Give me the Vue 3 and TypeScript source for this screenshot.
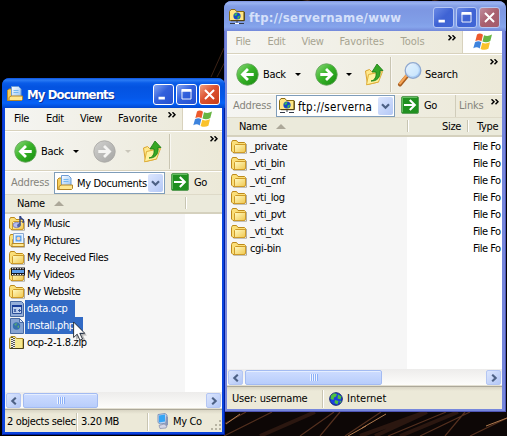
<script setup lang="ts">
interface FileItem {
  name: string
  icon: string
  type?: string
  selected?: boolean
}
interface ExplorerWindow {
  id: string
  title: string
  titleIcon: string
  menu: string[]
  forward: string
  search: boolean
  address: string
  addressIcon: string
  links: boolean
  columns: string[]
  files: FileItem[]
  status: string[]
  zoneIcon: string
}

const folders = ['_private', '_vti_bin', '_vti_cnf', '_vti_log', '_vti_pvt', '_vti_txt', 'cgi-bin']

const windows: ExplorerWindow[] = [
  {
    id: 'remote',
    title: 'ftp://servername/www',
    titleIcon: 'ftp',
    menu: ['File', 'Edit', 'View', 'Favorites', 'Tools'],
    forward: 'forward',
    search: true,
    address: 'ftp://serverna',
    addressIcon: 'ftp',
    links: true,
    columns: ['Size', 'Type'],
    files: folders.map((name) => ({ name, icon: 'folder', type: 'File Fo' })),
    status: ['User: username', 'Internet'],
    zoneIcon: 'globe',
  },
  {
    id: 'local',
    title: 'My Documents',
    titleIcon: 'docs',
    menu: ['File', 'Edit', 'View', 'Favorite'],
    forward: 'forward-off',
    search: false,
    address: 'My Documents',
    addressIcon: 'docs',
    links: false,
    columns: [''],
    files: [
      { name: 'My Music', icon: 'music' },
      { name: 'My Pictures', icon: 'pictures' },
      { name: 'My Received Files', icon: 'folder' },
      { name: 'My Videos', icon: 'videos' },
      { name: 'My Website', icon: 'folder' },
      { name: 'data.ocp', icon: 'data', selected: true },
      { name: 'install.php', icon: 'php', selected: true },
      { name: 'ocp-2-1.8.zip', icon: 'zip' },
    ],
    status: ['2 objects selec', '3.20 MB', 'My Co'],
    zoneIcon: 'computer',
  },
]
</script>

<template>
  <div class="desktop">
    <svg class="defs" width="0" height="0">
      <defs>
        <linearGradient id="g-green" x1="0" y1="0" x2="1" y2="1">
          <stop offset="0" stop-color="#8fd97f" /><stop offset=".45" stop-color="#3bb52b" /><stop offset="1" stop-color="#138a0c" />
        </linearGradient>
        <linearGradient id="g-grey" x1="0" y1="0" x2="1" y2="1">
          <stop offset="0" stop-color="#d2d2d0" /><stop offset="1" stop-color="#a4a4a2" />
        </linearGradient>
        <linearGradient id="g-folder" x1="0" y1="0" x2="1" y2="1">
          <stop offset="0" stop-color="#fffbc4" /><stop offset="1" stop-color="#f0c64c" />
        </linearGradient>
        <linearGradient id="g-page" x1="0" y1="0" x2="1" y2="1">
          <stop offset="0" stop-color="#ffffff" /><stop offset="1" stop-color="#8fc0f4" />
        </linearGradient>
      </defs>

      <symbol id="back" viewBox="0 0 24 24">
        <circle cx="12" cy="12" r="11.2" fill="url(#g-green)" stroke="#68a45e" stroke-width=".9" />
        <path d="M18.5 12H7.5M12.5 6.2L6.7 12l5.8 5.8" fill="none" stroke="#fff" stroke-width="2.9" />
      </symbol>
      <symbol id="forward" viewBox="0 0 24 24">
        <circle cx="12" cy="12" r="11.2" fill="url(#g-green)" stroke="#68a45e" stroke-width=".9" />
        <path d="M5.5 12h11M11.5 6.2l5.8 5.8-5.8 5.8" fill="none" stroke="#fff" stroke-width="2.9" />
      </symbol>
      <symbol id="forward-off" viewBox="0 0 24 24">
        <circle cx="12" cy="12" r="11.2" fill="url(#g-grey)" stroke="#aaa9a5" stroke-width=".9" />
        <path d="M5.5 12h11M11.5 6.2l5.8 5.8-5.8 5.8" fill="none" stroke="#f4f4f2" stroke-width="2.9" />
      </symbol>
      <symbol id="up" viewBox="0 0 20 24">
        <path d="M1.500 9l4-1.500 2 2 7-1.500v12l-11 2.500z" fill="#ffe88b" stroke="#dba42e" />
        <path d="M4.500 12.500l14-3-4 10.500-12 2.800z" fill="#fff2a0" stroke="#dfae38" />
        <path d="M7 19c4-1 5.500-4 5-9H8l5-8 6 6.500h-3c1 7-3.500 11-9 10.500z" fill="#36a725" stroke="#187b12" stroke-width=".8" />
      </symbol>
      <symbol id="search" viewBox="0 0 26 26">
        <path d="M3 23.500L10 15" stroke="#a85d1e" stroke-width="4" stroke-linecap="round" />
        <path d="M3 22.500L9.500 14.500" stroke="#f6a657" stroke-width="2.200" stroke-linecap="round" />
        <circle cx="16" cy="9.500" r="7.800" fill="url(#g-page)" stroke="#8fa9d0" stroke-width="1.300" />
        <circle cx="16" cy="9.500" r="5.800" fill="#d9f0ff" opacity=".7" />
      </symbol>
      <symbol id="go" viewBox="0 0 18 18">
        <rect x=".5" y=".5" width="17" height="17" rx="1.500" fill="#209020" stroke="#5b9e58" />
        <path d="M1.500 16V1.500H16" fill="none" stroke="#65bd61" />
        <path d="M3 9h10M8.800 4l5 5-5 5" fill="none" stroke="#fff" stroke-width="2.100" />
      </symbol>
      <symbol id="folder" viewBox="0 0 16 16">
        <path d="M2.500 14.200H15.600V5" fill="none" stroke="#77705c" opacity=".6" />
        <path d="M.5 12V3.500l1-2h4l1.500 2h6.500l1 1V12l-1 1.500H2z" fill="#fbdf78" stroke="#bd8a1b" />
        <path d="M3.500 13V6.500l1-1h10V12l-1 1.500h-10z" fill="url(#g-folder)" stroke="#cf9b28" />
      </symbol>
      <symbol id="docs" viewBox="0 0 16 16">
        <path d="M.5 14.500v-10l1.500-1.500h4v11.500z" fill="#f6cd5b" stroke="#b98a28" />
        <path d="M4.500.5h7l2.500 2.500v8.500H4.500z" fill="url(#g-page)" stroke="#6d9cd5" />
        <path d="M6.500 4.500h5M6.500 6.500h5" stroke="#75b7ef" />
        <path d="M2 14.500v-3l2-1.500h11.500v3.500l-1 1z" fill="#ffe790" stroke="#b58625" />
      </symbol>
      <symbol id="globe" viewBox="0 0 14 14">
        <circle cx="7" cy="7" r="6.300" fill="#1b3fe0" stroke="#10206c" />
        <path d="M2 3.500L5 1.300l3 .7-1 2.500-2 1-.5 2.500-3-1zM9 2.500l3.500 2-1 3-3-1zM6 8l3.500 1-1 3.500-3-1.500zM10.500 9.500l2-1-1.500 3z" fill="#4cc13f" />
      </symbol>
      <symbol id="ftp" viewBox="0 0 16 16">
        <path d="M.5 11.500v-9L2 .5h4l1.500 2h7.500v9z" fill="#ffe784" stroke="#8a6b12" />
        <path d="M15.300 3v8.700H2" fill="none" stroke="#4a3b12" />
        <circle cx="8" cy="7" r="3.600" fill="#1747c8" /><path d="M5 6l2-2 1.500.8L7 7zM8.500 7.500l2.500-1-1 3-1.500.5z" fill="#3ec646" />
        <path d="M8 12v2M1 14.500h14" stroke="#333a48" /><path d="M6 14.500h4" stroke="#fff" stroke-width="1.200" />
      </symbol>
      <symbol id="music" viewBox="0 0 16 16">
        <use href="#folder" width="16" height="16" />
        <ellipse cx="7.500" cy="9" rx="3.500" ry="2.600" fill="#b7bff0" stroke="#8084c0" />
        <path d="M11 9.500V-1l1 3 2.500 2-.5 3" fill="none" stroke="#2e4386" stroke-width="1.400" /><circle cx="9.800" cy="9.500" r="1.700" fill="#50619f" />
      </symbol>
      <symbol id="pictures" viewBox="0 0 16 16">
        <use href="#folder" width="16" height="16" />
        <path d="M4.500.5h10v10h-10z" fill="#e9f4ff" stroke="#8ba7cf" /><path d="M6.500 2.500h6v6h-6z" fill="#5ca2ee" />
        <circle cx="9.500" cy="5.500" r="1.800" fill="#f9d6b5" /><path d="M3 10.500h12v3H3z" fill="#ffe991" stroke="#b98a28" />
      </symbol>
      <symbol id="videos" viewBox="0 0 16 16">
        <use href="#folder" width="16" height="16" />
        <path d="M2 .5h14v8H2z" fill="#17171c" /><path d="M3 3h12v3H3z" fill="#5f9fea" />
        <path d="M3 1.700h12M3 7.500h12" stroke="#fff" stroke-dasharray="1.300 1.300" />
      </symbol>
      <symbol id="data" viewBox="0 0 16 16">
        <path d="M1.500.5h11l2 2v13h-13z" fill="#95afd9" stroke="#476aa3" /><path d="M3.500 4.500h9v8h-9z" fill="#bed0ee" stroke="#2b4f98" />
        <path d="M3 5h10" stroke="#183c98" stroke-width="2" /><path d="M5 8l2 3M7 8l-2 3M9 9.500h3M10.500 8v3" stroke="#3558a0" />
      </symbol>
      <symbol id="php" viewBox="0 0 16 16">
        <path d="M1.500.5h9l4 4v11h-13z" fill="#86a4d3" stroke="#476aa3" /><path d="M10.500.5v4h4z" fill="#d8e5fa" stroke="#476aa3" />
        <circle cx="7.500" cy="8" r="3.700" fill="#356fae" /><path d="M5 6l3-1-1 3zM8 9l2-2v3z" fill="#57a873" />
      </symbol>
      <symbol id="zip" viewBox="0 0 16 16">
        <path d="M.5 13.500v-10L2 1.500h4l1.500 2h6.500v10z" fill="#f6e88d" stroke="#ae8b21" />
        <path d="M14.500 4v9.500H1" fill="none" stroke="#4a421d" />
        <path d="M2 3h4v10H2z" fill="#eee" /><path d="M3 2v11M5 3v10" stroke="#242424" stroke-dasharray="1 1" stroke-width="1.500" />
      </symbol>
      <symbol id="computer" viewBox="0 0 14 16">
        <path d="M2 1.500L9 .5l2 1.500v8L4 11 2 9.500z" fill="#bed3f0" stroke="#8197bd" /><path d="M3 2.500l6-1v7l-6 1z" fill="#35a5f4" />
        <path d="M10 3l2 1v8l-3 2" fill="#8996b7" /><path d="M3 12.500l5-1.500 3 2-1 2-6 .5z" fill="#d4d5e6" stroke="#8389aa" stroke-width=".7" />
      </symbol>
      <symbol id="flag" viewBox="0 0 20 18">
        <path d="M4 1.500C6 0 8 .4 10 1.800L8.500 8.300C6.500 7 4.500 7 2.300 8.300z" fill="#ed5a2c" />
        <path d="M11 2.200c2.500 1.300 5 1 8-.6L17.300 8c-2.700 1.500-5.200 1.600-7.800.5z" fill="#67b543" />
        <path d="M2 9.300c2.500-1.300 4.500-1.200 6.300 0L6.700 15.500C4.700 14 2.700 14 .3 15.300z" fill="#3d83dd" />
        <path d="M9.300 9.800c2.500 1 5 .8 7.700-.5l-1.600 6.400c-2.700 1.500-5.200 1.500-7.800.2z" fill="#fac22c" />
      </symbol>
      <symbol id="more" viewBox="0 0 8 6">
        <path d="M.5.3L3 2.800.5 5.300M4.500.3L7 2.800 4.500 5.300" fill="none" stroke="#000" stroke-width="1.500" />
      </symbol>
      <symbol id="chev" viewBox="0 0 8 8">
        <path d="M2.200.7L5.700 4 2.200 7.300" fill="none" stroke="#4d6185" stroke-width="2.100" />
      </symbol>
    </svg>

    <svg class="wallpaper" viewBox="0 0 507 436">
      <rect width="507" height="436" fill="#000" />
      <rect x="225" y="412" width="282" height="24" fill="#0d0706" />
      <g stroke="#54301f" fill="none">
        <path d="M211 77L224 48M217 77L227 58M294 3L310 0M432 0L448 3" opacity=".7" />
        <path d="M224 424l22-12M224 436l48-24M300 436l34-24M320 436l20-24M345 436l36-24M388 436l58-24M420 436l50-24M445 436l20-24M470 436l37-18" stroke-width="1.200" />
        <path d="M260 436l55-24M360 436l66-24M375 436l52-24M400 436l58-24" stroke="#2b1710" stroke-width="4" />
        <path d="M226 424l14-10M362 428l24-14M348 436l18-10M486 426l21-8" stroke="#b07a4e" />
      </g>
    </svg>

    <section v-for="w in windows" :key="w.id" class="window" :class="w.id">
      <header class="titlebar">
        <svg class="ic16"><use :href="'#' + w.titleIcon" /></svg>
        <h1>{{ w.title }}</h1>
        <div class="controls">
          <svg class="ctl" viewBox="0 0 21 21"><path d="M5 14.500h7" stroke="#fff" stroke-width="3" /></svg>
          <svg class="ctl" viewBox="0 0 21 21"><path d="M5.500 6v9.500h10V6" fill="none" stroke="#fff" /><path d="M5 6h11" stroke="#fff" stroke-width="3" /></svg>
          <svg class="ctl close" viewBox="0 0 21 21"><path d="M5.500 5.500l10 10M15.500 5.500l-10 10" stroke="#fff" stroke-width="2.200" /></svg>
        </div>
      </header>

      <nav class="menubar">
        <span v-for="m in w.menu" :key="m">{{ m }}</span>
        <svg class="more"><use href="#more" /></svg>
        <div class="brand"><svg><use href="#flag" /></svg></div>
      </nav>

      <div class="toolbar">
        <svg class="round"><use href="#back" /></svg>
        <span>Back</span>
        <i class="caret"></i>
        <svg class="round"><use :href="'#' + w.forward" /></svg>
        <i class="caret" :class="{ off: w.forward === 'forward-off' }"></i>
        <svg class="upicon"><use href="#up" /></svg>
        <b class="rule"></b>
        <template v-if="w.search">
          <svg class="lens"><use href="#search" /></svg>
          <span>Search</span>
        </template>
        <svg class="more"><use href="#more" /></svg>
      </div>

      <div class="addressbar">
        <label>Address</label>
        <div class="combo">
          <svg class="ic16"><use :href="'#' + w.addressIcon" /></svg>
          <span>{{ w.address }}</span>
          <div class="drop"><svg viewBox="0 0 9 7"><path d="M1 1.200l3.500 3.500L8 1.200" fill="none" stroke="#4d6185" stroke-width="2.200" /></svg></div>
        </div>
        <svg class="go"><use href="#go" /></svg>
        <span class="golabel">Go</span>
        <div v-if="w.links" class="links">Links</div>
        <svg v-if="w.links" class="more"><use href="#more" /></svg>
      </div>

      <div class="colhead">
        <div class="namecol">Name<i class="sort"></i></div>
        <div v-for="c in w.columns" :key="c" class="col">{{ c }}</div>
      </div>

      <ul class="list">
        <li v-for="f in w.files" :key="f.name" :class="{ selected: f.selected }">
          <svg class="ic16"><use :href="'#' + f.icon" /></svg>
          <div class="cell"><span class="fname">{{ f.name }}</span></div>
          <span v-if="f.type" class="ftype">{{ f.type }}</span>
        </li>
      </ul>

      <div class="scrollbar">
        <div class="sbtn"><svg class="flip"><use href="#chev" /></svg></div>
        <div class="thumb"><i></i><i></i><i></i><i></i></div>
        <div class="sbtn end"><svg><use href="#chev" /></svg></div>
      </div>

      <footer class="statusbar">
        <div v-for="(s, i) in w.status" :key="s" class="pane">
          <svg v-if="i === w.status.length - 1" class="zone"><use :href="'#' + w.zoneIcon" /></svg>
          <span>{{ s }}</span>
        </div>
        <svg v-if="w.id === 'local'" class="grip" viewBox="0 0 12 12">
          <path d="M9 1h2v2H9zM5 5h2v2H5zM9 5h2v2H9zM1 9h2v2H1zM5 9h2v2H5zM9 9h2v2H9z" fill="#b8b4a3" />
        </svg>
      </footer>
    </section>

    <svg class="cursor" viewBox="0 0 14 22">
      <path d="M3 3v16l4-3.500 2.500 5.500 3-1.500-2.500-5h4z" fill="#000" opacity=".25" />
      <path d="M.6 1v15.500l3.600-3.300 2.700 6 2.600-1.200-2.700-5.700h5z" fill="#fff" stroke="#1c2430" stroke-width=".9" />
    </svg>
  </div>
</template>

<style>
body { margin: 0; overflow: hidden; background: #000; }
</style>

<style scoped>
.desktop { position: relative; width: 507px; height: 436px; overflow: hidden; font: 11px/17px "DejaVu Sans Condensed", "Noto Sans", sans-serif; letter-spacing: -.35px; color: #000; }
.desktop * { box-sizing: border-box; }
.defs, .wallpaper { position: absolute; top: 0; left: 0; }
.wallpaper { width: 507px; height: 436px; }
svg { display: block; flex: none; }
span, label { white-space: nowrap; }

.window { position: absolute; display: flex; flex-direction: column; padding: 0 3px 3px; border-radius: 8px 8px 0 0; }
.local { left: 2px; top: 78px; width: 223px; height: 357px; background: #0a44dd; box-shadow: inset 1px 0 #0831c9, inset -1px -1px #001da0; }
.remote { left: 224px; top: 1px; width: 282px; height: 411px; padding-right: 4px; background: #7687dc; box-shadow: inset 1px 0 #5f6dc8, inset -1px -1px #4f55b4; }

.titlebar { flex: none; display: flex; height: 30px; margin: 0 -3px; padding: 0 5px; border-radius: 7px 7px 0 0; }
.local .titlebar { background: linear-gradient(#0a50dc 0, #2b7cf5 2px, #0a5ce8 5px, #0453e0 9px, #0558ea 20px, #0662f8 25px, #0147d0 30px); }
.remote .titlebar { margin-right: -4px; padding-right: 6px; background: linear-gradient(#7d93e0 0, #9bb4f1 2px, #849fe6 5px, #7d97e2 9px, #819fe8 22px, #86a5ec 26px, #7388d9 30px); }
.titlebar .ic16 { margin-top: 8px; }
h1 { margin: 7px 0 0 4px; font: bold 13px/19px "DejaVu Sans Condensed", "Noto Sans", sans-serif; white-space: nowrap; color: #fff; }
.local h1 { letter-spacing: -.87px; text-shadow: 1px 1px #0a2f94; }
.remote h1 { color: #d5e0fa; letter-spacing: .25px; }
.controls { display: flex; gap: 2px; margin: 6px 0 0 auto; }
.ctl { width: 21px; height: 21px; border: 1px solid #fff; border-radius: 3px; background: linear-gradient(135deg, #85a5f2, #3260dc 45%, #2450cf); }
.ctl.close { background: linear-gradient(135deg, #f0a080, #dc5230 45%, #c93d18); }
.remote .ctl { border-color: #b5c7f3; background: linear-gradient(135deg, #6a8ae6, #3f63d4 50%, #4066d6); }
.remote .ctl.close { background: linear-gradient(135deg, #c08c9c, #a9606f 50%, #a45b6b); }

.menubar, .toolbar, .addressbar { flex: none; display: flex; background: linear-gradient(90deg, #f5f5f2, #eeecdf 70%, #ece9d8); }
.menubar { height: 23px; border-bottom: 1px solid #d8d2bd; line-height: 22px; }
.local .menubar { padding-left: 9px; }
.remote .menubar { padding-left: 8.500px; color: #a7a491; }
.menubar span { flex: none; }
.local .menubar span:nth-child(1) { width: 32px; }
.local .menubar span:nth-child(2) { width: 34px; }
.local .menubar span:nth-child(3) { width: 38px; }
.local .menubar span:nth-child(4) { width: 50px; letter-spacing: 0; }
.remote .menubar span:nth-child(1) { width: 32px; }
.remote .menubar span:nth-child(2) { width: 34px; }
.remote .menubar span:nth-child(3) { width: 38px; }
.remote .menubar span:nth-child(4) { width: 61px; letter-spacing: 0; }
.remote .menubar span:nth-child(5) { width: 47px; letter-spacing: 0; }
.more { width: 8px; height: 6px; }
.menubar .more { margin-top: 3.500px; }
.brand { display: flex; justify-content: center; width: 40px; margin-left: auto; border-left: 1px solid #d8d2bd; background: #fff; }
.brand svg { width: 20px; height: 18px; margin-top: 2px; }

.toolbar { height: 40px; align-items: center; border-top: 1px solid #fff; border-bottom: 1px solid #d8d2bd; padding-left: 9px; }
.round { width: 23px; height: 23px; }
.toolbar span { width: 32px; margin-left: 4px; }
.caret { flex: none; width: 0; height: 0; border: 3px solid transparent; border-top-color: #000; border-bottom: 0; }
.caret.off { border-top-color: #c9c6ba; }
.round ~ .round { margin-left: 14px; }
.local .caret ~ .caret { margin-left: 9px; }
.remote .caret ~ .caret { margin-left: 8px; }
.upicon { width: 20px; height: 24px; margin-left: 11px; }
.remote .upicon { margin-left: 12px; }
.rule { width: 2px; height: 35px; margin-left: 7px; border-left: 1px solid #c9c5b2; border-right: 1px solid #f8f7f2; }
.remote .rule { margin-left: 6px; }
.lens { width: 26px; height: 26px; margin-left: 5px; }
.toolbar .lens + span { margin-left: 2px; letter-spacing: -.2px; }
.toolbar .more { align-self: flex-start; margin: 3.500px 4px 0 auto; }

.addressbar { height: 23px; border-top: 1px solid #fff; color: #000; line-height: 21px; }
.addressbar label { width: 43px; margin-left: 6px; color: #85847b; flex: none; letter-spacing: -.15px; }
.combo { flex: none; display: flex; width: 111px; height: 22px; padding: 2px; border: 1px solid #7f9db9; background: #fff; }
.remote .combo { width: 119px; }
.combo span { flex: 1; margin-left: 4px; line-height: 18px; }
.remote .combo span { margin-left: 3px; letter-spacing: .3px; font-size: 11.500px; }
.drop { display: flex; align-items: center; justify-content: center; width: 15px; height: 18px; margin: -1px -1px 0 0; border-radius: 2px; background: linear-gradient(135deg, #dce6fe, #b4c8f6); }
.drop svg { width: 9px; height: 7px; }
.go { width: 18px; height: 18px; margin: 1px 5px 0 6px; }
.links { width: 36px; margin-left: 18px; padding-left: 3px; border-left: 1px solid #d0ccba; color: #85847b; letter-spacing: -.2px; }
.addressbar .more { margin-top: 4px; }

.colhead { flex: none; display: flex; height: 20px; background: #ebeadb; border-bottom: 2px solid #d5d1be; box-shadow: inset 0 1px #dedac8; line-height: 19px; }
.namecol { display: flex; align-items: center; width: 180px; padding: 0 0 0 12px; }
.sort { width: 0; height: 0; margin-left: 9px; border: 5px solid transparent; border-bottom-color: #aca899; border-top: 0; }
.col { margin: 3px 0; border-left: 1px solid #c7c5b2; box-shadow: inset 1px 0 #fff; line-height: 13px; flex: 1; }
.remote .col { flex: none; width: 60px; text-align: right; padding-right: 6px; }
.remote .col:last-child { width: 35px; text-align: left; padding: 0 0 0 9px; }

.list { flex: 1; margin: 0; padding: 1px 0 0 4px; list-style: none; overflow: hidden; background: linear-gradient(90deg, #f6f6f6 180px, #fff 180px); }
.list li { display: flex; align-items: center; height: 17px; }
.ic16 { width: 16px; height: 16px; overflow: visible; }
.cell { width: 226px; flex: none; }
.ftype { letter-spacing: -.5px; }
.fname { display: inline-block; height: 17px; padding: 0 3px 0 2px; line-height: 17px; }
.remote .fname { padding-left: 3px; }
.local .cell { width: 170px; }
.selected .fname { background: #316ac5; color: #fff; padding-right: 8px; }

.scrollbar { flex: none; display: flex; height: 17px; padding: 1px 1px 0; background: linear-gradient(#edeceb, #fdfdfb); border-bottom: 1px solid #e3e0d2; }
.sbtn { display: flex; align-items: center; justify-content: center; width: 15px; height: 15px; border: 1px solid #b4c6f3; border-radius: 2px; background: linear-gradient(135deg, #dce6fe, #b3c7f5); }
.sbtn svg { width: 8px; height: 8px; }
.flip { transform: scaleX(-1); }
.end { margin-left: auto; }
.thumb { display: flex; align-items: center; justify-content: center; gap: 1px; width: 75px; height: 15px; margin-left: 2px; border: 1px solid #a3bbf2; border-radius: 2px; box-shadow: inset 0 1px #e5eeff; background: linear-gradient(#cddcff, #b8cdfb); }
.remote .thumb { width: 137px; }
.thumb i { width: 1px; height: 7px; background: #eef4fe; box-shadow: 1px 0 #8cb0f8; }

.statusbar { flex: none; display: flex; height: 23px; padding-top: 2px; border-top: 1px solid #aca899; background: linear-gradient(#d9d5c4, #ece9d8 4px); line-height: 20px; }
.pane { display: flex; overflow: hidden; border-left: 1px solid #fff; box-shadow: -1px 0 #c9c5b2; margin: 1px 0; line-height: 18px; }
.pane:first-child { border: 0; box-shadow: none; }
.local .pane:nth-child(1) { width: 72px; padding-left: 2px; }
.local .pane:nth-child(2) { width: 71px; padding-left: 3px; }
.local .pane:nth-child(3) { width: 58px; padding-left: 7px; }
.remote .pane:nth-child(1) { width: 96px; padding-left: 5px; letter-spacing: -.2px; }
.remote .pane:nth-child(2) { flex: 1; padding-left: 5px; letter-spacing: 0; }
.zone { width: 14px; height: 16px; margin-right: 3px; }
.remote .zone { height: 14px; width: 14px; margin: 2px 4px 0 0; }
.grip { width: 12px; height: 12px; margin: 7px 0 0 auto; }

.cursor { position: absolute; left: 73px; top: 321px; width: 14px; height: 22px; }
</style>
